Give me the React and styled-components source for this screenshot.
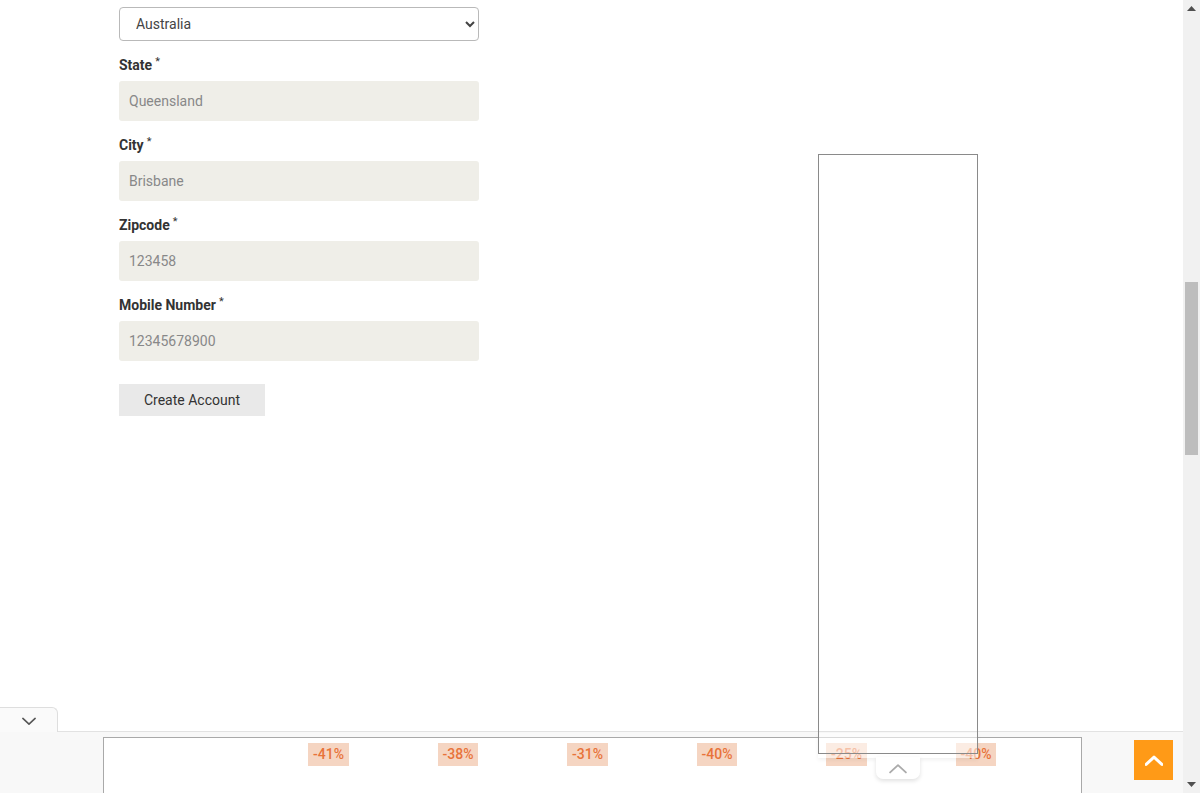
import React from 'react';
import styled, { createGlobalStyle } from 'styled-components';

const GlobalStyle = createGlobalStyle`
  html, body {
    margin: 0;
    padding: 0;
    background: #fff;
    font-family: 'Roboto', 'Liberation Sans', sans-serif;
  }
  * {
    box-sizing: border-box;
  }
`;

const Screen = styled.div`
  width: 1200px;
  height: 793px;
  display: flex;
  overflow: hidden;
`;

const Page = styled.div`
  flex: 1;
  position: relative;
  display: flex;
  flex-direction: column;
`;

const Form = styled.form`
  width: 360px;
  margin: 7px 0 0 119px;
  display: flex;
  flex-direction: column;
`;

const Select = styled.select`
  width: 360px;
  height: 34px;
  border: 1px solid #b9b9b9;
  border-radius: 4px;
  background: #fff;
  color: #444;
  font-family: 'Roboto', 'Liberation Sans', sans-serif;
  font-size: 14px;
  padding: 0 12px;
  margin-bottom: 14px;
`;

const Label = styled.label`
  height: 20px;
  line-height: 20px;
  font-size: 14px;
  font-weight: 700;
  color: #333;
  margin-bottom: 6px;

  sup {
    font-weight: 400;
    font-size: 11px;
    margin-left: 3px;
    vertical-align: baseline;
    position: relative;
    top: -5px;
  }
`;

const Input = styled.input`
  width: 360px;
  height: 40px;
  border: none;
  border-radius: 3px;
  background: #efeee8;
  color: #888;
  font-family: 'Roboto', 'Liberation Sans', sans-serif;
  font-size: 14px;
  padding: 0 10px;
  margin-bottom: 14px;
  outline: none;
`;

const Submit = styled.button`
  width: 146px;
  height: 32px;
  margin-top: 9px;
  border: none;
  background: #e9e9e9;
  color: #333;
  font-family: 'Roboto', 'Liberation Sans', sans-serif;
  font-size: 14px;
  padding: 0 0 1px;
  cursor: pointer;
`;

const Spacer = styled.div`
  flex: 1;
`;

const Frame = styled.div`
  position: absolute;
  left: 818px;
  top: 154px;
  width: 160px;
  height: 600px;
  border: 1px solid #8a8a8a;
  z-index: 5;
`;

const Fade = styled.div`
  position: absolute;
  left: 818px;
  top: 733px;
  width: 160px;
  height: 25px;
  background: rgba(255, 255, 255, 0.55);
  box-shadow: 0 2px 4px rgba(0, 0, 0, 0.06);
  z-index: 4;
`;

const PullTab = styled.div`
  position: absolute;
  left: 876px;
  top: 757px;
  width: 44px;
  height: 22px;
  background: #fff;
  border-radius: 0 0 7px 7px;
  box-shadow: 0 2px 4px rgba(0, 0, 0, 0.12);
  display: flex;
  align-items: center;
  justify-content: center;
  z-index: 4;
`;

const TabRow = styled.div`
  display: flex;
  position: relative;
  z-index: 2;
  margin-bottom: -1px;
`;

const Tab = styled.div`
  width: 58px;
  height: 25px;
  background: #fafafa;
  border: 1px solid #dedede;
  border-left: none;
  border-bottom: none;
  border-top-right-radius: 6px;
  display: flex;
  align-items: center;
  justify-content: center;
  padding-top: 3px;
`;

const Footer = styled.div`
  height: 62px;
  border-top: 1px solid #e2e2e2;
  background: #f8f8f8;
  padding-top: 5px;
  display: flex;
  align-items: flex-start;
`;

const Carousel = styled.div`
  width: 979px;
  height: 57px;
  margin-left: 103px;
  background: #fff;
  border: 1px solid #a9a9a9;
  border-bottom: none;
  display: grid;
  grid-template-columns: repeat(6, 129.5px);
  padding: 5px 0 0 204px;
`;

const Cell = styled.div`
  display: flex;
`;

const Badge = styled.span`
  height: 23px;
  line-height: 23px;
  padding: 0 5px;
  background: #f5d5c2;
  color: #e8733a;
  font-size: 14px;
  font-weight: 500;
`;

const TopButton = styled.button`
  width: 39px;
  height: 40px;
  margin: 3px 0 0 52px;
  border: none;
  background: #ff9a17;
  display: flex;
  align-items: center;
  justify-content: center;
  padding: 0;
`;

const Scrollbar = styled.div`
  width: 17px;
  background: #f1f1f1;
  display: flex;
  flex-direction: column;
`;

const Arrow = styled.div`
  height: 17px;
  display: flex;
  align-items: center;
  justify-content: center;
`;

const Track = styled.div`
  flex: 1;
  padding: 265px 2px 0;
`;

const Thumb = styled.div`
  height: 173px;
  background: #bdbdbd;
`;

const Chevron = ({ up, color, size, width }) => (
  <svg width={size} height={size / 2 + 2} viewBox="0 0 16 9" fill="none">
    <path
      d={up ? 'M1 8 L8 1.5 L15 8' : 'M1 1 L8 7.5 L15 1'}
      stroke={color}
      strokeWidth={width}
      strokeLinecap="round"
      strokeLinejoin="round"
    />
  </svg>
);

const fields = [
  { label: 'State', value: 'Queensland' },
  { label: 'City', value: 'Brisbane' },
  { label: 'Zipcode', value: '123458' },
  { label: 'Mobile Number', value: '12345678900' },
];

const discounts = ['-41%', '-38%', '-31%', '-40%', '-25%', '-40%'];

export default function App() {
  return (
    <>
      <GlobalStyle />
      <Screen>
        <Page>
          <Form onSubmit={(e) => e.preventDefault()}>
            <Select defaultValue="Australia">
              <option>Australia</option>
            </Select>
            {fields.map((f) => (
              <React.Fragment key={f.label}>
                <Label>
                  {f.label}
                  <sup>*</sup>
                </Label>
                <Input defaultValue={f.value} readOnly />
              </React.Fragment>
            ))}
            <Submit type="submit">Create Account</Submit>
          </Form>
          <Spacer />
          <TabRow>
            <Tab>
              <Chevron color="#555" size={14} width={1.8} />
            </Tab>
          </TabRow>
          <Footer>
            <Carousel>
              {discounts.map((d, i) => (
                <Cell key={i}>
                  <Badge>{d}</Badge>
                </Cell>
              ))}
            </Carousel>
            <TopButton aria-label="Back to top">
              <Chevron up color="#fff" size={18} width={2.6} />
            </TopButton>
          </Footer>
          <Frame />
          <Fade />
          <PullTab>
            <Chevron up color="#aaa" size={18} width={1.6} />
          </PullTab>
        </Page>
        <Scrollbar>
          <Arrow>
            <svg width="9" height="5" viewBox="0 0 9 5">
              <path d="M0 5 L4.5 0 L9 5 Z" fill="#505050" />
            </svg>
          </Arrow>
          <Track>
            <Thumb />
          </Track>
          <Arrow>
            <svg width="9" height="5" viewBox="0 0 9 5">
              <path d="M0 0 L4.5 5 L9 0 Z" fill="#505050" />
            </svg>
          </Arrow>
        </Scrollbar>
      </Screen>
    </>
  );
}
